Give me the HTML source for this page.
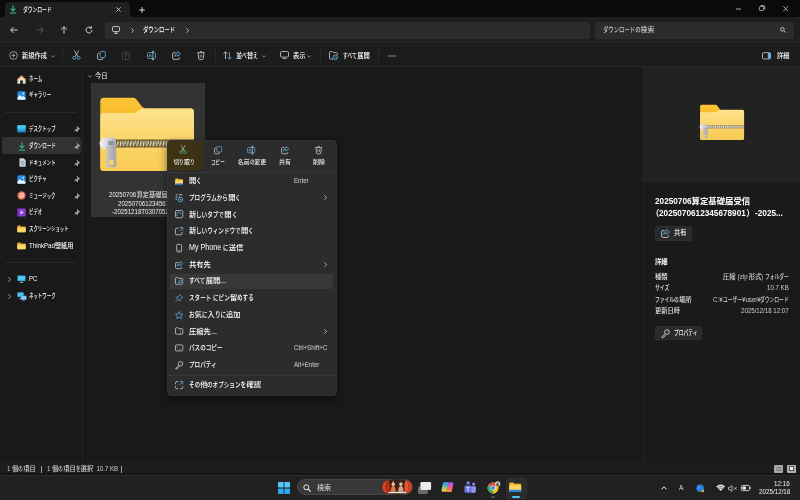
<!DOCTYPE html>
<html lang="ja">
<head>
<meta charset="utf-8">
<title>ダウンロード</title>
<style>
*{box-sizing:border-box;margin:0;padding:0}
html,body{width:800px;height:500px;overflow:hidden;background:#0a0a0a}
body{position:relative;font-family:"Liberation Sans","Noto Sans CJK JP",sans-serif;font-size:6.25px;color:#e8e8e8;line-height:1}
.abs{position:absolute}
.t{position:absolute;white-space:nowrap;font-weight:500;will-change:transform}
.kw{display:inline-block;white-space:nowrap}
.ks{display:inline-block;transform:scaleX(.765);transform-origin:0 50%}
svg{position:absolute;overflow:visible}
.ls{display:inline-block;white-space:pre;font-size:1.12em;transform:scaleX(.875);transform-origin:0 50%}
.sep{position:absolute;width:1px;background:#282828}
.hsep{position:absolute;height:1px;background:#333}
</style>
</head>
<body>
<!-- 00_frame -->
<div class="abs" style="left:0px;top:0px;width:800px;height:17px;background:#0a0a0a;"></div>
<div class="abs" style="left:5px;top:2px;width:125px;height:16px;background:#1f1f1f;border-radius:4px 4px 0 0"></div>
<svg style="left:2px;top:14px" width="3" height="3" viewBox="0 0 3 3"><path d="M3 0v3H0A3 3 0 0 0 3 0z" fill="#1f1f1f"/></svg>
<svg style="left:130px;top:14px" width="3" height="3" viewBox="0 0 3 3"><path d="M0 0v3h3A3 3 0 0 1 0 0z" fill="#1f1f1f"/></svg>
<div class="abs" style="left:0px;top:17px;width:800px;height:26px;background:#1f1f1f;"></div>
<div class="abs" style="left:105px;top:21.5px;width:485px;height:17px;background:#2c2c2c;border-radius:2px"></div>
<div class="abs" style="left:595px;top:21.5px;width:198.5px;height:17px;background:#2c2c2c;border-radius:2px"></div>
<div class="abs" style="left:0px;top:42px;width:800px;height:1px;background:#262626;"></div>
<div class="abs" style="left:0px;top:43px;width:800px;height:24px;background:#1c1c1c;border-top:1px solid #171717;border-bottom:1px solid #272727"></div>
<div class="abs" style="left:0px;top:67px;width:82px;height:395px;background:#191919;"></div>
<div class="abs" style="left:82px;top:67px;width:1px;height:395px;background:#242424;"></div>
<div class="abs" style="left:83px;top:67px;width:559px;height:395px;background:#191919;"></div>
<div class="abs" style="left:641.5px;top:67px;width:158.5px;height:115px;background:#222222;"></div>
<div class="abs" style="left:641.5px;top:182px;width:158.5px;height:280px;background:#1a1a1a;"></div>
<div class="abs" style="left:643.5px;top:182px;width:1.8px;height:280px;background:#222222;"></div>
<div class="abs" style="left:0px;top:462px;width:800px;height:13px;background:#1c1c1c;"></div>
<div class="abs" style="left:0px;top:473px;width:800px;height:1.5px;background:#151515;"></div>
<div class="abs" style="left:0px;top:474.5px;width:800px;height:25.5px;background:#212121;border-top:1px solid #2c2c2c"></div>
<!-- 10_title -->
<svg style="left:9px;top:5px" width="8" height="9" viewBox="0 0 8 9"><path d="M4 0.3v5.6M1.6 3.6L4 6l2.4-2.4" fill="none" stroke="#2fb58a" stroke-width="1.1"/><path d="M0.8 8h6.4" stroke="#2fb58a" stroke-width="1.1"/></svg>
<div class="t" style="top:4.50px;font-size:6.25px;color:#fff;line-height:10px;height:10px;left:23.00px;"><span class="kw" style="width:4.59em"><span class="ks">ダウンロード</span></span></div>
<svg style="left:116px;top:7px" width="5" height="5" viewBox="0 0 5 5"><path d="M0.3 0.3l4.4 4.4M4.7 0.3L0.3 4.7" stroke="#ddd" stroke-width="0.8"/></svg>
<svg style="left:139px;top:7px" width="6" height="6" viewBox="0 0 6 6"><path d="M3 0.2v5.6M0.2 3h5.6" stroke="#eee" stroke-width="0.9"/></svg>
<svg style="left:735.5px;top:8px" width="5" height="2" viewBox="0 0 5 2"><path d="M0 1h5" stroke="#ccc" stroke-width="0.8"/></svg>
<svg style="left:759px;top:5.2px" width="6.2" height="6.2" viewBox="0 0 7 7"><rect x="0.5" y="1.7" width="4.6" height="4.6" rx="1" fill="none" stroke="#ccc" stroke-width="0.9"/><path d="M2 0.6h3a1.5 1.5 0 0 1 1.5 1.5v3" fill="none" stroke="#ccc" stroke-width="0.9"/></svg>
<svg style="left:783.3px;top:5.5px" width="5.4" height="5.4" viewBox="0 0 6 6"><path d="M0.3 0.3l5.4 5.4M5.7 0.3L0.3 5.7" stroke="#ddd" stroke-width="0.8"/></svg>
<!-- 20_nav -->
<svg style="left:10px;top:26px" width="8" height="8" viewBox="0 0 8 8"><path d="M7.5 4H0.8M3.6 1L0.7 4l2.9 3" fill="none" stroke="#e4e4e4" stroke-width="0.9"/></svg>
<svg style="left:36px;top:26px" width="8" height="8" viewBox="0 0 8 8"><path d="M0.5 4h6.7M4.4 1l2.9 3-2.9 3" fill="none" stroke="#5a5a5a" stroke-width="0.9"/></svg>
<svg style="left:60px;top:26px" width="8" height="8" viewBox="0 0 8 8"><path d="M4 7.5V0.8M1 3.6L4 0.7l3 2.9" fill="none" stroke="#e4e4e4" stroke-width="0.9"/></svg>
<svg style="left:85px;top:26px" width="8" height="8" viewBox="0 0 8 8"><path d="M6.9 4a2.9 2.9 0 1 1-1-2.2" fill="none" stroke="#e4e4e4" stroke-width="0.9"/><path d="M6.4 0.3v1.9H4.5" fill="none" stroke="#e4e4e4" stroke-width="0.9"/></svg>
<svg style="left:112px;top:26px" width="8" height="8" viewBox="0 0 8 8"><rect x="0.5" y="0.6" width="7" height="5" rx="1" fill="none" stroke="#d8d8d8" stroke-width="0.9"/><path d="M2.3 7.4h3.4M4 5.6v1.8" stroke="#d8d8d8" stroke-width="0.9"/></svg>
<svg style="left:131px;top:27.5px" width="3" height="5" viewBox="0 0 3 5"><path d="M0.4 0.3L2.6 2.5 0.4 4.7" fill="none" stroke="#ddd" stroke-width="0.8"/></svg>
<div class="t" style="top:25.00px;font-size:7.00px;color:#fff;line-height:10px;height:10px;left:143.00px;"><span class="kw" style="width:4.59em"><span class="ks">ダウンロード</span></span></div>
<svg style="left:185.5px;top:27.5px" width="3" height="5" viewBox="0 0 3 5"><path d="M0.4 0.3L2.6 2.5 0.4 4.7" fill="none" stroke="#ddd" stroke-width="0.8"/></svg>
<div class="t" style="top:25.00px;font-size:7.00px;color:#c4c4c4;line-height:10px;height:10px;left:603.00px;"><span class="kw" style="width:5.36em"><span class="ks">ダウンロードの</span></span>検索</div>
<svg style="left:780px;top:27px" width="6" height="6" viewBox="0 0 6 6"><circle cx="2.3" cy="2.3" r="1.8" fill="none" stroke="#ddd" stroke-width="0.8"/><path d="M3.6 3.6l2 2" stroke="#ddd" stroke-width="0.9"/></svg>
<!-- 30_toolbar -->
<svg style="left:8.5px;top:51px" width="9" height="9" viewBox="0 0 9 9"><circle cx="4.5" cy="4.5" r="3.9" fill="none" stroke="#9fb4c4" stroke-width="0.8"/><path d="M4.5 2.6v3.8M2.6 4.5h3.8" stroke="#9fb4c4" stroke-width="0.8"/></svg>
<div class="t" style="top:50.50px;font-size:6.25px;color:#fff;line-height:10px;height:10px;left:22.00px;">新規作成</div>
<svg style="left:50.5px;top:54.5px" width="4" height="3" viewBox="0 0 4 3"><path d="M0.3 0.5L2 2.2 3.7 0.5" fill="none" stroke="#aaa" stroke-width="0.7"/></svg>
<div class="sep" style="left:62px;top:48px;height:15px"></div>
<svg style="left:71.5px;top:50px" width="9" height="10" viewBox="0 0 9 10"><path d="M2.2 0.4L6 6.6M6.8 0.4L3 6.6" fill="none" stroke="#cfcfcf" stroke-width="0.8"/><circle cx="2.3" cy="7.8" r="1.5" fill="none" stroke="#5fb0e0" stroke-width="0.8"/><circle cx="6.7" cy="7.8" r="1.5" fill="none" stroke="#5fb0e0" stroke-width="0.8"/></svg>
<svg style="left:96.5px;top:50.5px" width="9" height="9" viewBox="0 0 9 9"><rect x="3" y="0.5" width="5.3" height="6" rx="1.2" fill="none" stroke="#5fb0e0" stroke-width="0.8"/><path d="M2.6 2.3H1.7a1.2 1.2 0 0 0-1.2 1.2v3.8a1.2 1.2 0 0 0 1.2 1.2h3a1.2 1.2 0 0 0 1.2-1.2v-0.5" fill="none" stroke="#cfcfcf" stroke-width="0.8"/></svg>
<svg style="left:122px;top:50.5px" width="8" height="9" viewBox="0 0 8 9"><rect x="0.5" y="1.3" width="7" height="7.2" rx="1" fill="none" stroke="#4a4a4a" stroke-width="0.8"/><rect x="2.5" y="0.4" width="3" height="1.8" rx="0.6" fill="#1c1c1c" stroke="#4a4a4a" stroke-width="0.7"/><rect x="3.4" y="3.6" width="4.1" height="4.9" fill="#1c1c1c" stroke="#4a4a4a" stroke-width="0.7"/></svg>
<svg style="left:146.5px;top:50.5px" width="9" height="9" viewBox="0 0 9 9"><rect x="0.5" y="1.6" width="8" height="5.8" rx="1.2" fill="none" stroke="#5fb0e0" stroke-width="0.8"/><path d="M5.9 0.3v8.4M4.9 0.3h2M4.9 8.7h2" stroke="#cfcfcf" stroke-width="0.7"/><path d="M1.9 6L3.2 3l1.3 3M2.3 5h1.8" fill="none" stroke="#5fb0e0" stroke-width="0.6"/></svg>
<svg style="left:171.5px;top:50.5px" width="9" height="9" viewBox="0 0 9 9"><path d="M3.6 1.6H2a1.4 1.4 0 0 0-1.4 1.4v4a1.4 1.4 0 0 0 1.4 1.4h4a1.4 1.4 0 0 0 1.4-1.4V6.4" fill="none" stroke="#cfcfcf" stroke-width="0.8"/><path d="M5.6 0.5l2.9 2.4-2.9 2.4V3.9C4.2 3.8 3.3 4.4 2.7 5.6 2.8 3.5 3.8 2.2 5.6 2z" fill="none" stroke="#5fb0e0" stroke-width="0.8" stroke-linejoin="round"/></svg>
<svg style="left:197px;top:50.5px" width="8" height="9" viewBox="0 0 8 9"><path d="M0.3 1.7h7.4M2.8 1.6a1.2 1.2 0 0 1 2.4 0" fill="none" stroke="#cfcfcf" stroke-width="0.8"/><path d="M1.1 1.9l0.6 5.7a1 1 0 0 0 1 0.9h2.6a1 1 0 0 0 1-0.9l0.6-5.7" fill="none" stroke="#cfcfcf" stroke-width="0.8"/><path d="M3.2 3.6v3M4.8 3.6v3" stroke="#cfcfcf" stroke-width="0.6"/></svg>
<div class="sep" style="left:215px;top:48px;height:15px"></div>
<svg style="left:222.5px;top:51px" width="9" height="9" viewBox="0 0 9 9"><path d="M2.5 8V0.8M0.5 2.8l2-2 2 2" fill="none" stroke="#cfcfcf" stroke-width="0.8"/><path d="M6.5 1v7.2M4.5 6.2l2 2 2-2" fill="none" stroke="#5fb0e0" stroke-width="0.8"/></svg>
<div class="t" style="top:50.50px;font-size:6.25px;color:#fff;line-height:10px;height:10px;left:236.00px;">並<span class="kw" style="width:0.77em"><span class="ks">べ</span></span>替<span class="kw" style="width:0.77em"><span class="ks">え</span></span></div>
<svg style="left:261.5px;top:54.5px" width="4" height="3" viewBox="0 0 4 3"><path d="M0.3 0.5L2 2.2 3.7 0.5" fill="none" stroke="#aaa" stroke-width="0.7"/></svg>
<svg style="left:280px;top:51px" width="9" height="8" viewBox="0 0 9 8"><rect x="0.5" y="0.5" width="8" height="5.6" rx="1.1" fill="none" stroke="#cfcfcf" stroke-width="0.8"/><path d="M2.6 7.5h3.8" stroke="#cfcfcf" stroke-width="0.8"/></svg>
<div class="t" style="top:50.50px;font-size:6.25px;color:#fff;line-height:10px;height:10px;left:293.00px;">表示</div>
<svg style="left:306.5px;top:54.5px" width="4" height="3" viewBox="0 0 4 3"><path d="M0.3 0.5L2 2.2 3.7 0.5" fill="none" stroke="#aaa" stroke-width="0.7"/></svg>
<div class="sep" style="left:320px;top:48px;height:15px"></div>
<svg style="left:329px;top:51px" width="9" height="9" viewBox="0 0 9 9"><path d="M0.5 7V1.6a1 1 0 0 1 1-1h1.7l1 1h3.2a1 1 0 0 1 1 1V4" fill="none" stroke="#cfcfcf" stroke-width="0.8"/><path d="M0.5 7a1 1 0 0 0 1 1H4" fill="none" stroke="#cfcfcf" stroke-width="0.8"/><circle cx="6.3" cy="6.3" r="2.3" fill="none" stroke="#5fb0e0" stroke-width="0.9"/><path d="M5.3 6.3h2M6.5 5.4l0.9 0.9-0.9 0.9" fill="none" stroke="#5fb0e0" stroke-width="0.6"/></svg>
<div class="t" style="top:50.50px;font-size:6.25px;color:#fff;line-height:10px;height:10px;left:343.00px;"><span class="kw" style="width:2.29em"><span class="ks">すべて</span></span>展開</div>
<div class="sep" style="left:378px;top:48px;height:15px"></div>
<svg style="left:388px;top:54.5px" width="8" height="2" viewBox="0 0 8 2"><circle cx="1" cy="1" r="0.75" fill="#e0e0e0"/><circle cx="4" cy="1" r="0.75" fill="#e0e0e0"/><circle cx="7" cy="1" r="0.75" fill="#e0e0e0"/></svg>
<svg style="left:762px;top:51.5px" width="9" height="8" viewBox="0 0 9 8"><rect x="0.5" y="0.7" width="8" height="6.2" rx="1.1" fill="none" stroke="#cfcfcf" stroke-width="0.8"/><path d="M5.8 0.8h1.6a1 1 0 0 1 1 1v4a1 1 0 0 1-1 1H5.8z" fill="#5fb0e0"/></svg>
<div class="t" style="top:50.50px;font-size:6.25px;color:#fff;line-height:10px;height:10px;left:777.00px;">詳細</div>
<!-- 40_side -->
<div class="abs" style="left:1.5px;top:137px;width:79.5px;height:16.8px;background:#323232;border-radius:2px"></div>
<div class="hsep" style="left:5px;top:112px;width:72px;background:#292929"></div>
<div class="hsep" style="left:5px;top:262px;width:72px;background:#292929"></div>
<svg style="left:17px;top:74.5px" width="9" height="9" viewBox="0 0 9 9"><path d="M4.5 0.4L0.4 4v4.2a0.5 0.5 0 0 0 0.5 0.5h2.3V5.6h2.6v3.1h2.3a0.5 0.5 0 0 0 0.5-0.5V4z" fill="#e8dccb"/><path d="M4.5 0.3L0.2 4.2l0.7 0.7 3.6-3.2 3.6 3.2 0.7-0.7z" fill="#e6913c"/></svg>
<div class="t" style="top:74.00px;font-size:6.25px;color:#fff;line-height:10px;height:10px;left:28.50px;"><span class="kw" style="width:2.13em"><span class="ks" style="transform:scaleX(0.710)">ホーム</span></span></div>
<svg style="left:17px;top:91px" width="9" height="9" viewBox="0 0 9 9"><rect x="0.3" y="0.3" width="8.4" height="8.4" rx="1.6" fill="#2c8be0"/><path d="M0.3 7l2.6-2.9 2 2 1.3-1.2 2.5 2.4v0.2a1.2 1.2 0 0 1-1.2 1.2H1.5a1.2 1.2 0 0 1-1.2-1.2z" fill="#eaf4ff"/><circle cx="6.3" cy="2.7" r="0.9" fill="#d7ecff"/></svg>
<div class="t" style="top:90.40px;font-size:6.25px;color:#fff;line-height:10px;height:10px;left:28.50px;"><span class="kw" style="width:3.55em"><span class="ks" style="transform:scaleX(0.710)">ギャラリー</span></span></div>
<svg style="left:17px;top:124.5px" width="9" height="8" viewBox="0 0 9 8"><rect x="0.3" y="0.3" width="8.4" height="7" rx="0.9" fill="#2aa4dc"/><rect x="0.3" y="0.3" width="8.4" height="3.4" rx="0.9" fill="#4cc3ec"/><rect x="0.3" y="6.2" width="8.4" height="1.1" fill="#1877b8"/></svg>
<div class="t" style="top:124.00px;font-size:6.25px;color:#fff;line-height:10px;height:10px;left:28.50px;"><span class="kw" style="width:4.26em"><span class="ks" style="transform:scaleX(0.710)">デスクトップ</span></span></div>
<svg style="left:74px;top:126px" width="6" height="6" viewBox="0 0 6 6"><path d="M3.1 0.4l2.5 2.5-1 0.3-1 1.2-0.2 1.5L1.1 3.6l1.5-0.2 1.2-1zM2.2 3.8L0.4 5.6" fill="#aeaeae" stroke="#aeaeae" stroke-width="0.7" stroke-linejoin="round"/></svg>
<svg style="left:17.5px;top:141.5px" width="8" height="9" viewBox="0 0 8 9"><path d="M4 0.3v5.6M1.6 3.6L4 6l2.4-2.4" fill="none" stroke="#2fb58a" stroke-width="1.1"/><path d="M0.8 8h6.4" stroke="#2fb58a" stroke-width="1.1"/></svg>
<div class="t" style="top:141.00px;font-size:6.25px;color:#fff;line-height:10px;height:10px;left:28.50px;"><span class="kw" style="width:4.26em"><span class="ks" style="transform:scaleX(0.710)">ダウンロード</span></span></div>
<svg style="left:74px;top:143px" width="6" height="6" viewBox="0 0 6 6"><path d="M3.1 0.4l2.5 2.5-1 0.3-1 1.2-0.2 1.5L1.1 3.6l1.5-0.2 1.2-1zM2.2 3.8L0.4 5.6" fill="#aeaeae" stroke="#aeaeae" stroke-width="0.7" stroke-linejoin="round"/></svg>
<svg style="left:18.8px;top:158px" width="7" height="9" viewBox="0 0 7 9"><path d="M0.4 1a0.7 0.7 0 0 1 0.7-0.7h3.6l2 2v5.7a0.7 0.7 0 0 1-0.7 0.7H1.1a0.7 0.7 0 0 1-0.7-0.7z" fill="#c9d3dc"/><path d="M1.7 3.6h3.6M1.7 5h3.6M1.7 6.4h3.6" stroke="#6b7f92" stroke-width="0.6"/></svg>
<div class="t" style="top:157.50px;font-size:6.25px;color:#fff;line-height:10px;height:10px;left:28.50px;"><span class="kw" style="width:4.26em"><span class="ks" style="transform:scaleX(0.710)">ドキュメント</span></span></div>
<svg style="left:74px;top:159.5px" width="6" height="6" viewBox="0 0 6 6"><path d="M3.1 0.4l2.5 2.5-1 0.3-1 1.2-0.2 1.5L1.1 3.6l1.5-0.2 1.2-1zM2.2 3.8L0.4 5.6" fill="#aeaeae" stroke="#aeaeae" stroke-width="0.7" stroke-linejoin="round"/></svg>
<svg style="left:17px;top:174.5px" width="9" height="9" viewBox="0 0 9 9"><rect x="0.3" y="0.3" width="8.4" height="8.4" rx="1.6" fill="#2c8be0"/><path d="M0.3 7l2.6-2.9 2 2 1.3-1.2 2.5 2.4v0.2a1.2 1.2 0 0 1-1.2 1.2H1.5a1.2 1.2 0 0 1-1.2-1.2z" fill="#eaf4ff"/><circle cx="6.3" cy="2.7" r="0.9" fill="#d7ecff"/></svg>
<div class="t" style="top:174.00px;font-size:6.25px;color:#fff;line-height:10px;height:10px;left:28.50px;"><span class="kw" style="width:2.84em"><span class="ks" style="transform:scaleX(0.710)">ピクチャ</span></span></div>
<svg style="left:74px;top:176px" width="6" height="6" viewBox="0 0 6 6"><path d="M3.1 0.4l2.5 2.5-1 0.3-1 1.2-0.2 1.5L1.1 3.6l1.5-0.2 1.2-1zM2.2 3.8L0.4 5.6" fill="#aeaeae" stroke="#aeaeae" stroke-width="0.7" stroke-linejoin="round"/></svg>
<svg style="left:17px;top:191px" width="9" height="9" viewBox="0 0 9 9"><circle cx="4.5" cy="4.5" r="4.2" fill="#e0644c"/><circle cx="4.5" cy="4.5" r="3" fill="#f08f6e"/><path d="M3.9 6.2V2.6l2.2-0.5v3.3" fill="none" stroke="#fff" stroke-width="0.6"/><circle cx="3.3" cy="6.2" r="0.7" fill="#fff"/><circle cx="5.5" cy="5.5" r="0.7" fill="#fff"/></svg>
<div class="t" style="top:190.50px;font-size:6.25px;color:#fff;line-height:10px;height:10px;left:28.50px;"><span class="kw" style="width:4.26em"><span class="ks" style="transform:scaleX(0.710)">ミュージック</span></span></div>
<svg style="left:74px;top:192.5px" width="6" height="6" viewBox="0 0 6 6"><path d="M3.1 0.4l2.5 2.5-1 0.3-1 1.2-0.2 1.5L1.1 3.6l1.5-0.2 1.2-1zM2.2 3.8L0.4 5.6" fill="#aeaeae" stroke="#aeaeae" stroke-width="0.7" stroke-linejoin="round"/></svg>
<svg style="left:17px;top:207.5px" width="9" height="9" viewBox="0 0 9 9"><rect x="0.3" y="0.5" width="8.4" height="8" rx="1.2" fill="#8b3fd0"/><rect x="0.3" y="0.5" width="1.6" height="8" fill="#6a2bb0"/><path d="M3.6 2.8v3.4l3-1.7z" fill="#f1dcff"/></svg>
<div class="t" style="top:207.00px;font-size:6.25px;color:#fff;line-height:10px;height:10px;left:28.50px;"><span class="kw" style="width:2.13em"><span class="ks" style="transform:scaleX(0.710)">ビデオ</span></span></div>
<svg style="left:74px;top:209px" width="6" height="6" viewBox="0 0 6 6"><path d="M3.1 0.4l2.5 2.5-1 0.3-1 1.2-0.2 1.5L1.1 3.6l1.5-0.2 1.2-1zM2.2 3.8L0.4 5.6" fill="#aeaeae" stroke="#aeaeae" stroke-width="0.7" stroke-linejoin="round"/></svg>
<svg style="left:17px;top:225px" width="9" height="8" viewBox="0 0 9 8"><path d="M0.3 1.2a0.7 0.7 0 0 1 0.7-0.7h2.2l0.9 0.9h3.9a0.7 0.7 0 0 1 0.7 0.7v4.4a0.7 0.7 0 0 1-0.7 0.7H1a0.7 0.7 0 0 1-0.7-0.7z" fill="#e9a825"/><path d="M0.3 2.6h8.4v3.9a0.7 0.7 0 0 1-0.7 0.7H1a0.7 0.7 0 0 1-0.7-0.7z" fill="#fbd669"/></svg>
<div class="t" style="top:223.80px;font-size:6.25px;color:#fff;line-height:10px;height:10px;left:28.50px;"><span class="kw" style="width:6.39em"><span class="ks" style="transform:scaleX(0.710)">スクリーンショット</span></span></div>
<svg style="left:17px;top:241.5px" width="9" height="8" viewBox="0 0 9 8"><path d="M0.3 1.2a0.7 0.7 0 0 1 0.7-0.7h2.2l0.9 0.9h3.9a0.7 0.7 0 0 1 0.7 0.7v4.4a0.7 0.7 0 0 1-0.7 0.7H1a0.7 0.7 0 0 1-0.7-0.7z" fill="#e9a825"/><path d="M0.3 2.6h8.4v3.9a0.7 0.7 0 0 1-0.7 0.7H1a0.7 0.7 0 0 1-0.7-0.7z" fill="#fbd669"/></svg>
<div class="t" style="top:240.50px;font-size:6.25px;color:#fff;line-height:10px;height:10px;left:28.50px;"><span class="kw" style="width:4.140em"><span class="ls">ThinkPad</span></span>壁紙用</div>
<svg style="left:7.5px;top:276.5px" width="3" height="5" viewBox="0 0 3 5"><path d="M0.4 0.3L2.6 2.5 0.4 4.7" fill="none" stroke="#ccc" stroke-width="0.8"/></svg>
<svg style="left:17px;top:275px" width="9" height="8" viewBox="0 0 9 8"><rect x="0.4" y="0.4" width="8.2" height="5.6" rx="0.7" fill="#2a9fd8"/><rect x="1.1" y="1.1" width="6.8" height="4.2" fill="#53c6f0"/><path d="M2.6 7.5h3.8M4.5 6v1.5" stroke="#9aa7b2" stroke-width="0.8"/></svg>
<div class="t" style="top:274.00px;font-size:6.25px;color:#fff;line-height:10px;height:10px;left:28.50px;"><span class="kw" style="width:1.361em"><span class="ls">PC</span></span></div>
<svg style="left:7.5px;top:293.5px" width="3" height="5" viewBox="0 0 3 5"><path d="M0.4 0.3L2.6 2.5 0.4 4.7" fill="none" stroke="#ccc" stroke-width="0.8"/></svg>
<svg style="left:17px;top:291.5px" width="10" height="9" viewBox="0 0 10 9"><rect x="0.3" y="0.3" width="6.4" height="4.6" rx="0.6" fill="#2a9fd8"/><rect x="0.9" y="0.9" width="5.2" height="3.4" fill="#53c6f0"/><rect x="3.6" y="3.6" width="6" height="4.4" rx="0.6" fill="#4a7fb4"/><rect x="4.2" y="4.2" width="4.8" height="3.2" fill="#8fd0f5"/><path d="M2 6.7h2M5.6 8.7h2" stroke="#9aa7b2" stroke-width="0.7"/></svg>
<div class="t" style="top:291.00px;font-size:6.25px;color:#fff;line-height:10px;height:10px;left:28.50px;"><span class="kw" style="width:4.26em"><span class="ks" style="transform:scaleX(0.710)">ネットワーク</span></span></div>
<!-- 50_main -->
<svg style="left:87.5px;top:74.5px" width="4" height="3" viewBox="0 0 4 3"><path d="M0.3 0.5L2 2.2 3.7 0.5" fill="none" stroke="#bbb" stroke-width="0.7"/></svg>
<div class="t" style="top:71.00px;font-size:6.25px;color:#e0e0e0;line-height:10px;height:10px;left:95.00px;">今日</div>
<div class="abs" style="left:91px;top:83px;width:113.5px;height:133.5px;background:#333333;"></div>
<svg style="left:98px;top:96px" width="98" height="76" viewBox="98 96 98 76">
<defs>
<linearGradient id="fb" x1="0" y1="0" x2="0" y2="1"><stop offset="0" stop-color="#fcc435"/><stop offset="1" stop-color="#eba51a"/></linearGradient>
<linearGradient id="ff" x1="0" y1="0" x2="0" y2="1"><stop offset="0" stop-color="#fde28f"/><stop offset="0.5" stop-color="#fbd669"/><stop offset="1" stop-color="#f8cb55"/></linearGradient>
<linearGradient id="zp" x1="0" y1="0" x2="1" y2="0"><stop offset="0" stop-color="#f4f4f6"/><stop offset="0.55" stop-color="#d2d2d8"/><stop offset="1" stop-color="#b4b4ba"/></linearGradient>
<linearGradient id="zt" x1="0" y1="0" x2="1" y2="0"><stop offset="0" stop-color="#c6c6c8"/><stop offset="1" stop-color="#a4a4a8"/></linearGradient>
<pattern id="teeth" x="116" y="139.5" width="3.3" height="8" patternUnits="userSpaceOnUse"><rect width="3.3" height="8" fill="#5e4e1c"/><path d="M0.2 7.2L1.2 1.4h1L1.3 7.2z" fill="#ece8dc"/><path d="M1.9 6.6L2.8 0.8h0.5v3z" fill="#cfc8b0"/></pattern>
</defs>
<path d="M100.3 101.2a3.5 3.5 0 0 1 3.5-3.5h28.7c2 0 3.2 0.6 4.5 2.2l3.6 5.2c1.3 1.9 2.6 3.1 5.2 3.1h44.7a3.5 3.5 0 0 1 3.5 3.5v55.7a3.5 3.5 0 0 1-3.5 3.5H103.8a3.5 3.5 0 0 1-3.5-3.5z" fill="url(#fb)"/>
<path d="M100.3 116a3 3 0 0 1 3-3h29.2c2.3 0 3.6-0.5 5.2-1.8l1.6-1.3c1.2-0.9 2.2-1.2 3.7-1.2h47.5a3.5 3.5 0 0 1 3.5 3.5v55.2a3.5 3.5 0 0 1-3.5 3.5H103.8a3.5 3.5 0 0 1-3.5-3.5z" fill="url(#ff)"/>
<rect x="114" y="139.5" width="80" height="8" fill="url(#teeth)"/>
<path d="M99.6 143.4a5.8 5.8 0 0 1 5.8-5.8h7.4a3 3 0 0 1 3 3v5.7a3 3 0 0 1-3 3h-7.4a5.8 5.8 0 0 1-5.8-5.8z" fill="url(#zp)"/>
<rect x="108.2" y="141" width="6" height="4.2" rx="0.6" fill="#8f93a3"/>
<path d="M106.4 145.5h9.9v20.4a1.4 1.4 0 0 1-1.4 1.4h-7.1a1.4 1.4 0 0 1-1.4-1.4z" fill="url(#zt)"/>
<rect x="109.2" y="160.2" width="4.4" height="4.4" fill="#f9d465"/>
</svg>
<div class="t" style="top:190.30px;font-size:6.25px;color:#ececec;line-height:10px;height:10px;font-weight:400;left:148.00px;width:200px;margin-left:-100px;text-align:center;"><span class="kw" style="width:4.360em"><span class="ls">20250706</span></span>算定基礎届受信（</div>
<div class="t" style="top:198.60px;font-size:6.25px;color:#ececec;line-height:10px;height:10px;font-weight:400;left:148.00px;width:200px;margin-left:-100px;text-align:center;"><span class="kw" style="width:8.721em"><span class="ls">2025070612345678</span></span>）</div>
<div class="t" style="top:206.90px;font-size:6.25px;color:#ececec;line-height:10px;height:10px;font-weight:400;left:148.00px;width:200px;margin-left:-100px;text-align:center;"><span class="kw" style="width:11.442em"><span class="ls">-20251218T030705Z-1-00</span></span></div>
<!-- 60_details -->
<svg style="left:698.6px;top:104.4px" width="46" height="36.5" viewBox="98 96 98 76" preserveAspectRatio="none">
<path d="M100.3 101.2a3.5 3.5 0 0 1 3.5-3.5h28.7c2 0 3.2 0.6 4.5 2.2l3.6 5.2c1.3 1.9 2.6 3.1 5.2 3.1h44.7a3.5 3.5 0 0 1 3.5 3.5v55.7a3.5 3.5 0 0 1-3.5 3.5H103.8a3.5 3.5 0 0 1-3.5-3.5z" fill="url(#fb)"/>
<path d="M100.3 116a3 3 0 0 1 3-3h29.2c2.3 0 3.6-0.5 5.2-1.8l1.6-1.3c1.2-0.9 2.2-1.2 3.7-1.2h47.5a3.5 3.5 0 0 1 3.5 3.5v55.2a3.5 3.5 0 0 1-3.5 3.5H103.8a3.5 3.5 0 0 1-3.5-3.5z" fill="url(#ff)"/>
<rect x="114" y="140" width="80" height="7" fill="#9c9274"/><path d="M114 143.5h80" stroke="#e4e0d2" stroke-width="4" stroke-dasharray="2.2 2.2"/>
<path d="M99.6 143.4a5.8 5.8 0 0 1 5.8-5.8h7.4a3 3 0 0 1 3 3v5.7a3 3 0 0 1-3 3h-7.4a5.8 5.8 0 0 1-5.8-5.8z" fill="url(#zp)"/>
<path d="M106.4 145.5h9.9v20.4a1.4 1.4 0 0 1-1.4 1.4h-7.1a1.4 1.4 0 0 1-1.4-1.4z" fill="url(#zt)"/>
<rect x="109.2" y="160.2" width="4.4" height="4.4" fill="#f9d465"/>
</svg>
<div class="t" style="top:195.00px;font-size:8.40px;color:#fff;line-height:12px;height:12px;font-weight:700;left:655.00px;"><span class="kw" style="width:4.360em"><span class="ls">20250706</span></span>算定基礎届受信</div>
<div class="t" style="top:206.60px;font-size:8.40px;color:#fff;line-height:12px;height:12px;font-weight:700;left:655.00px;margin-left:-4.4px;">（<span class="kw" style="width:10.356em"><span class="ls">2025070612345678901</span></span>）<span class="kw" style="width:3.323em"><span class="ls">-2025...</span></span></div>
<div class="abs" style="left:654.8px;top:225.8px;width:37px;height:14.8px;background:#2a2a2a;border-radius:2px;border:0.5px solid #2f2f2f"></div>
<svg style="left:660.5px;top:229px" width="9" height="9" viewBox="0 0 9 9"><path d="M3.6 1.6H2a1.4 1.4 0 0 0-1.4 1.4v4a1.4 1.4 0 0 0 1.4 1.4h4a1.4 1.4 0 0 0 1.4-1.4V6.4" fill="none" stroke="#d8d8d8" stroke-width="0.8"/><path d="M5.6 0.5l2.9 2.4-2.9 2.4V3.9C4.2 3.8 3.3 4.4 2.7 5.6 2.8 3.5 3.8 2.2 5.6 2z" fill="none" stroke="#5fb0e0" stroke-width="0.8" stroke-linejoin="round"/></svg>
<div class="t" style="top:228.30px;font-size:6.25px;color:#fff;line-height:10px;height:10px;left:673.70px;">共有</div>
<div class="t" style="top:257.20px;font-size:6.25px;color:#fff;line-height:10px;height:10px;font-weight:700;left:655.00px;">詳細</div>
<div class="t" style="top:271.50px;font-size:6.25px;color:#e4e4e4;line-height:10px;height:10px;left:655.00px;">種類</div>
<div class="t" style="top:271.50px;font-size:6.25px;color:#d0d0d0;line-height:10px;height:10px;right:11.00px;text-align:right;">圧縮<span class="kw" style="width:2.124em"><span class="ls">&nbsp;(zip&nbsp;</span></span>形式<span class="kw" style="width:0.599em"><span class="ls">)&nbsp;</span></span><span class="kw" style="width:3.83em"><span class="ks">フォルダー</span></span></div>
<div class="t" style="top:282.90px;font-size:6.25px;color:#e4e4e4;line-height:10px;height:10px;left:655.00px;"><span class="kw" style="width:2.29em"><span class="ks">サイズ</span></span></div>
<div class="t" style="top:282.90px;font-size:6.25px;color:#d0d0d0;line-height:10px;height:10px;right:11.00px;text-align:right;"><span class="kw" style="width:3.487em"><span class="ls">10.7 KB</span></span></div>
<div class="t" style="top:295.00px;font-size:6.25px;color:#e4e4e4;line-height:10px;height:10px;left:655.00px;"><span class="kw" style="width:3.83em"><span class="ks">ファイルの</span></span>場所</div>
<div class="t" style="top:295.00px;font-size:6.25px;color:#d0d0d0;line-height:10px;height:10px;right:11.00px;text-align:right;"><span class="kw" style="width:1.525em"><span class="ls">C:¥</span></span><span class="kw" style="width:3.06em"><span class="ks">ユーザー</span></span><span class="kw" style="width:2.996em"><span class="ls">¥user¥</span></span><span class="kw" style="width:4.59em"><span class="ks">ダウンロード</span></span></div>
<div class="t" style="top:306.30px;font-size:6.25px;color:#e4e4e4;line-height:10px;height:10px;left:655.00px;">更新日時</div>
<div class="t" style="top:306.30px;font-size:6.25px;color:#d0d0d0;line-height:10px;height:10px;right:11.00px;text-align:right;"><span class="kw" style="width:7.629em"><span class="ls">2025/12/18 12:07</span></span></div>
<div class="abs" style="left:654.8px;top:325.6px;width:47.2px;height:14.3px;background:#2a2a2a;border-radius:2px;border:0.5px solid #2f2f2f"></div>
<svg style="left:661px;top:328.5px" width="9" height="9" viewBox="0 0 9 9"><circle cx="6" cy="3" r="2.4" fill="none" stroke="#d8d8d8" stroke-width="0.8"/><path d="M4.2 4.6L0.8 8v0.6h1.4l0.5-0.9 0.9-0.2 0.3-0.9 0.9-0.3" fill="none" stroke="#d8d8d8" stroke-width="0.8" stroke-linejoin="round"/><circle cx="6.7" cy="2.3" r="0.5" fill="#d8d8d8"/></svg>
<div class="t" style="top:328.00px;font-size:6.25px;color:#fff;line-height:10px;height:10px;left:673.70px;"><span class="kw" style="width:3.83em"><span class="ks">プロパティ</span></span></div>
<!-- 70_status -->
<div class="t" style="top:464.00px;font-size:6.25px;color:#d0d0d0;line-height:10px;height:10px;left:7.00px;"><span class="kw" style="width:0.817em"><span class="ls">1&nbsp;</span></span>個<span class="kw" style="width:0.77em"><span class="ks">の</span></span>項目</div>
<div class="abs" style="left:40.5px;top:465.5px;width:0.8px;height:7px;background:#9a9a9a;"></div>
<div class="t" style="top:464.00px;font-size:6.25px;color:#d0d0d0;line-height:10px;height:10px;left:46.50px;"><span class="kw" style="width:0.817em"><span class="ls">1&nbsp;</span></span>個<span class="kw" style="width:0.77em"><span class="ks">の</span></span>項目<span class="kw" style="width:0.77em"><span class="ks">を</span></span>選択<span class="kw" style="width:4.032em"><span class="ls">&nbsp;&nbsp;10.7&nbsp;KB</span></span></div>
<div class="abs" style="left:120.5px;top:465.5px;width:0.8px;height:7px;background:#9a9a9a;"></div>
<div class="abs" style="left:774px;top:464.5px;width:8.6px;height:8.6px;background:#a8a8a8;border-radius:1px"></div>
<svg style="left:775.5px;top:466px" width="6" height="6" viewBox="0 0 6 6"><path d="M0.5 1.5h5M0.5 3h5M0.5 4.5h5" stroke="#666" stroke-width="0.6"/></svg>
<div class="abs" style="left:787px;top:464.5px;width:8.6px;height:8.6px;background:#b0b0b0;border-radius:1px"></div>
<div class="abs" style="left:788.8px;top:466.2px;width:5px;height:4.6px;background:#f0f0f0;border:0.6px solid #555"></div>
<!-- 80_taskbar -->
<svg style="left:278px;top:481.8px" width="12" height="12" viewBox="0 0 12 12"><rect x="0" y="0" width="5.6" height="5.6" rx="0.5" fill="#52c6fb"/><rect x="6.4" y="0" width="5.6" height="5.6" rx="0.5" fill="#52c6fb"/><rect x="0" y="6.4" width="5.6" height="5.6" rx="0.5" fill="#2fa8ef"/><rect x="6.4" y="6.4" width="5.6" height="5.6" rx="0.5" fill="#2fa8ef"/></svg>
<div class="abs" style="left:297.2px;top:479px;width:115.4px;height:16.4px;background:#383838;border-radius:8.2px;border:0.5px solid #464646"></div>
<svg style="left:303.2px;top:484px" width="8" height="8" viewBox="0 0 8 8"><circle cx="3.3" cy="3.3" r="2.5" fill="none" stroke="#eee" stroke-width="1"/><path d="M5.2 5.2l2.4 2.4" stroke="#eee" stroke-width="1.1"/></svg>
<div class="t" style="top:482.80px;font-size:7.00px;color:#d0d0d0;line-height:10px;height:10px;left:316.50px;">検索</div>
<svg style="left:381.6px;top:479.4px" width="30.4" height="15.8" viewBox="0 0 30.4 15.8">
<ellipse cx="15.2" cy="7.9" rx="15" ry="7.8" fill="#3b1d18"/>
<path d="M6.6 0.9C2.6 1.8 0.3 4.6 0.3 7.9s2.3 6.1 6.3 7c-2-2-2.9-4.3-2.9-7s0.9-5 2.9-7z" fill="#d8401f"/>
<path d="M6.6 0.9c-2 2-2.9 4.3-2.9 7s0.9 5 2.9 7c1-2.2 1.5-4.5 1.5-7S7.6 3.1 6.6 0.9z" fill="#b52c16"/>
<path d="M23.8 0.9c4 0.9 6.3 3.7 6.3 7s-2.3 6.1-6.3 7c2-2 2.9-4.3 2.9-7s-0.9-5-2.9-7z" fill="#d8401f"/>
<path d="M23.8 0.9c2 2 2.9 4.3 2.9 7s-0.9 5-2.9 7c-1-2.2-1.5-4.5-1.5-7s0.5-4.8 1.5-7z" fill="#e2553a"/>
<path d="M8.6 12.8c0-3.6 1-6 2.6-6s2.6 2.4 2.6 6z" fill="#e8743c"/>
<circle cx="11.2" cy="5.2" r="1.7" fill="#f3c9a8"/>
<path d="M10.4 3.8l0.8-2.2 0.8 2.2z" fill="#d8d0c8"/>
<path d="M16.2 12.8c0-3.6 1-6 2.7-6s2.7 2.4 2.7 6z" fill="#d9a183"/>
<circle cx="18.9" cy="5" r="1.7" fill="#ead9b5"/>
<path d="M17.4 4.2a1.6 1.6 0 0 1 3 0z" fill="#7a6a3a"/>
<rect x="6.4" y="12.8" width="17.6" height="1.5" rx="0.5" fill="#ece6e2"/>
</svg>
<svg style="left:417.9px;top:481.6px" width="13.1" height="12" viewBox="0 0 13.1 12"><rect x="0" y="4.4" width="9.9" height="7.6" rx="1.3" fill="#6a6a6a"/><rect x="2.4" y="0" width="10.7" height="8.1" rx="1.3" fill="#ececec"/></svg>
<svg style="left:440.7px;top:481.1px" width="12.8" height="12" viewBox="0 0 12.8 12">
<defs>
<linearGradient id="cpa" x1="0" y1="0" x2="0" y2="1"><stop offset="0" stop-color="#2f86f2"/><stop offset="0.45" stop-color="#4fc3a0"/><stop offset="0.75" stop-color="#b6d84a"/><stop offset="1" stop-color="#f6c83a"/></linearGradient>
<linearGradient id="cpb" x1="0" y1="0" x2="0" y2="1"><stop offset="0" stop-color="#8a5cf0"/><stop offset="0.45" stop-color="#e85aa8"/><stop offset="0.8" stop-color="#f47a4a"/><stop offset="1" stop-color="#f5a030"/></linearGradient>
</defs>
<path d="M3.4 0.9h3c0.9 0 1.4 0.6 1.2 1.5L5.9 9.3c-0.2 0.9-1 1.5-1.9 1.5H2.2c-1.2 0-1.9-0.9-1.6-2.1l1.1-5.9C1.9 1.7 2.5 0.9 3.4 0.9z" fill="url(#cpa)"/>
<path d="M8.8 1.2h1.8c1.2 0 1.9 0.9 1.6 2.1l-1.1 5.9c-0.2 1.1-0.8 1.9-1.7 1.9h-3c-0.9 0-1.4-0.6-1.2-1.5L6.9 2.7c0.2-0.9 1-1.5 1.9-1.5z" fill="url(#cpb)"/>
</svg>
<svg style="left:464px;top:480.7px" width="12" height="12" viewBox="0 0 12 12"><circle cx="9.6" cy="2.9" r="1.5" fill="#8d94f0"/><circle cx="4.2" cy="1.9" r="1.7" fill="#7b83eb"/><path d="M6.6 5.3h4.6a0.7 0.7 0 0 1 0.7 0.7v3.4a2.5 2.5 0 0 1-2.5 2.5H8.5a2 2 0 0 1-1.9-2z" fill="#8d94f0"/><rect x="0.5" y="4.6" width="7" height="7.2" rx="1.3" fill="#6a72e0"/><path d="M2.5 6.3h3M4 6.3v4" stroke="#e6e8ff" stroke-width="1"/></svg>
<svg style="left:487px;top:480.5px" width="14" height="17" viewBox="0 0 14 17"><circle cx="6" cy="7" r="5.4" fill="#fff"/><path d="M6 7L1.33 4.3A5.4 5.4 0 0 1 10.68 4.3z" fill="#ea4335"/><path d="M6 7l4.68-2.7A5.4 5.4 0 0 1 6 12.4z" fill="#fbbc05"/><path d="M6 7v5.4A5.4 5.4 0 0 1 1.33 4.3z" fill="#34a853"/><circle cx="6" cy="7" r="2.5" fill="#fff"/><circle cx="6" cy="7" r="1.9" fill="#4285f4"/><circle cx="10.6" cy="2.9" r="2.7" fill="#d9d4cf"/><circle cx="10.6" cy="2.3" r="1" fill="#7a5b48"/><path d="M8.7 4.8a1.9 1.9 0 0 1 3.8 0z" fill="#444"/><rect x="4.5" y="15.4" width="3" height="1" rx="0.5" fill="#8a8a8a"/></svg>
<div class="abs" style="left:505.5px;top:477.5px;width:21px;height:21px;background:#2c2c2c;border-radius:2.5px;border:0.5px solid #323232"></div>
<svg style="left:509.4px;top:482.2px" width="13.2" height="10.8" viewBox="0 0 13.2 10.8"><path d="M0.3 1.4a0.9 0.9 0 0 1 0.9-0.9h3l1.2 1.2h5.9a0.9 0.9 0 0 1 0.9 0.9v6.6a0.9 0.9 0 0 1-0.9 0.9H1.2a0.9 0.9 0 0 1-0.9-0.9z" fill="#f3b927"/><path d="M0.3 3.6h11.9v5.6a0.9 0.9 0 0 1-0.9 0.9H1.2a0.9 0.9 0 0 1-0.9-0.9z" fill="#fbd669"/><path d="M0.3 7.8h11.9v1.4a0.9 0.9 0 0 1-0.9 0.9H1.2a0.9 0.9 0 0 1-0.9-0.9z" fill="#2d86d6"/></svg>
<div class="abs" style="left:512.3px;top:496px;width:7.5px;height:1.5px;background:#4cc2ff;border-radius:1px"></div>
<svg style="left:661px;top:486px" width="6" height="4" viewBox="0 0 6 4"><path d="M0.5 3.4L3 0.8l2.5 2.6" fill="none" stroke="#eee" stroke-width="1"/></svg>
<div class="t" style="top:483.00px;font-size:6.80px;color:#dcdcdc;line-height:10px;height:10px;left:681.00px;width:200px;margin-left:-100px;text-align:center;"><span class="kw" style="width:0.654em"><span class="ls">A</span></span></div>
<svg style="left:696px;top:483.5px" width="9" height="9" viewBox="0 0 9 9"><circle cx="4.2" cy="4.2" r="3.8" fill="#1e7fe0"/><circle cx="3.2" cy="3.4" r="1.8" fill="#4da3f3" opacity="0.6"/><circle cx="6.9" cy="7" r="1.3" fill="#e6b422"/></svg>
<svg style="left:715.7px;top:484px" width="9.4" height="7.2" viewBox="0 0 9.4 7.2"><path d="M4.7 7L0.3 2.4a6.3 6.3 0 0 1 8.8 0z" fill="#e8e8e8"/><path d="M1.5 3.7a4.6 4.6 0 0 1 6.4 0M2.7 5a2.9 2.9 0 0 1 4 0" fill="none" stroke="#212121" stroke-width="0.55"/></svg>
<svg style="left:728px;top:484.5px" width="10" height="7" viewBox="0 0 10 7"><path d="M0.5 2.3h1.5l2-1.8v6l-2-1.8H0.5z" fill="none" stroke="#ddd" stroke-width="0.7" stroke-linejoin="round"/><path d="M6 2.2l2.6 2.6M8.6 2.2L6 4.8" stroke="#ddd" stroke-width="0.7"/></svg>
<svg style="left:741px;top:485px" width="10" height="6" viewBox="0 0 10 6"><rect x="0.4" y="0.4" width="8" height="5.2" rx="1.2" fill="none" stroke="#eee" stroke-width="0.8"/><rect x="1.4" y="1.4" width="3.6" height="3.2" rx="0.5" fill="#eee"/><path d="M9.2 2v2" stroke="#eee" stroke-width="0.9"/></svg>
<div class="t" style="top:478.80px;font-size:6.40px;color:#f0f0f0;line-height:10px;height:10px;right:10.00px;text-align:right;"><span class="kw" style="width:2.452em"><span class="ls">12:16</span></span></div>
<div class="t" style="top:487.00px;font-size:6.40px;color:#f0f0f0;line-height:10px;height:10px;right:10.00px;text-align:right;"><span class="kw" style="width:4.905em"><span class="ls">2025/12/18</span></span></div>
<!-- 90_menu -->
<div class="abs" style="left:166.5px;top:139.5px;width:170.5px;height:256.5px;background:#2c2c2c;border:1px solid #323232;border-radius:4.5px;box-shadow:0 3px 9px rgba(0,0,0,0.5)"></div>
<div class="abs" style="left:167.5px;top:140.5px;width:35px;height:29.5px;border-radius:3.5px 2px 2px 2px;background:linear-gradient(90deg,#3e3311 0,#3c3214 70%,#39301a 100%)"></div>
<div class="hsep" style="left:167.5px;top:172px;width:168.5px;background:#373737"></div>
<div class="hsep" style="left:167.5px;top:374.5px;width:167px;background:#373737"></div>
<div class="abs" style="left:169.5px;top:273.5px;width:163.5px;height:15.5px;background:#383838;border-radius:2px"></div>
<svg style="left:179.2px;top:145.4px" width="8.3" height="9.2" viewBox="0 0 9 10"><path d="M2.2 0.4L6 6.6M6.8 0.4L3 6.6" fill="none" stroke="#b7c9b0" stroke-width="0.8"/><circle cx="2.3" cy="7.8" r="1.5" fill="none" stroke="#5aa58f" stroke-width="0.8"/><circle cx="6.7" cy="7.8" r="1.5" fill="none" stroke="#5aa58f" stroke-width="0.8"/></svg>
<svg style="left:213.9px;top:145.9px" width="8.3" height="8.3" viewBox="0 0 9 9"><rect x="3" y="0.5" width="5.3" height="6" rx="1.2" fill="none" stroke="#5fb0e0" stroke-width="0.8"/><path d="M2.6 2.3H1.7a1.2 1.2 0 0 0-1.2 1.2v3.8a1.2 1.2 0 0 0 1.2 1.2h3a1.2 1.2 0 0 0 1.2-1.2v-0.5" fill="none" stroke="#d8d8d8" stroke-width="0.8"/></svg>
<svg style="left:247.3px;top:145.9px" width="8.3" height="8.3" viewBox="0 0 9 9"><rect x="0.5" y="1.6" width="8" height="5.8" rx="1.2" fill="none" stroke="#5fb0e0" stroke-width="0.8"/><path d="M5.9 0.3v8.4M4.9 0.3h2M4.9 8.7h2" stroke="#d8d8d8" stroke-width="0.7"/><path d="M1.9 6L3.2 3l1.3 3M2.3 5h1.8" fill="none" stroke="#5fb0e0" stroke-width="0.6"/></svg>
<svg style="left:280.9px;top:145.9px" width="8.3" height="8.3" viewBox="0 0 9 9"><path d="M3.6 1.6H2a1.4 1.4 0 0 0-1.4 1.4v4a1.4 1.4 0 0 0 1.4 1.4h4a1.4 1.4 0 0 0 1.4-1.4V6.4" fill="none" stroke="#d8d8d8" stroke-width="0.8"/><path d="M5.6 0.5l2.9 2.4-2.9 2.4V3.9C4.2 3.8 3.3 4.4 2.7 5.6 2.8 3.5 3.8 2.2 5.6 2z" fill="none" stroke="#5fb0e0" stroke-width="0.8" stroke-linejoin="round"/></svg>
<svg style="left:315.1px;top:145.9px" width="7.4" height="8.3" viewBox="0 0 8 9"><path d="M0.3 1.7h7.4M2.8 1.6a1.2 1.2 0 0 1 2.4 0" fill="none" stroke="#d8d8d8" stroke-width="0.8"/><path d="M1.1 1.9l0.6 5.7a1 1 0 0 0 1 0.9h2.6a1 1 0 0 0 1-0.9l0.6-5.7" fill="none" stroke="#d8d8d8" stroke-width="0.8"/><path d="M3.2 3.6v3M4.8 3.6v3" stroke="#d8d8d8" stroke-width="0.6"/></svg>
<div class="t" style="top:157.40px;font-size:6.00px;color:#ececec;line-height:10px;height:10px;left:184.00px;width:200px;margin-left:-100px;text-align:center;">切<span class="kw" style="width:0.77em"><span class="ks">り</span></span>取<span class="kw" style="width:0.77em"><span class="ks">り</span></span></div>
<div class="t" style="top:157.40px;font-size:6.00px;color:#ececec;line-height:10px;height:10px;left:218.00px;width:200px;margin-left:-100px;text-align:center;"><span class="kw" style="width:2.29em"><span class="ks">コピー</span></span></div>
<div class="t" style="top:157.40px;font-size:6.00px;color:#ececec;line-height:10px;height:10px;left:251.50px;width:200px;margin-left:-100px;text-align:center;">名前<span class="kw" style="width:0.77em"><span class="ks">の</span></span>変更</div>
<div class="t" style="top:157.40px;font-size:6.00px;color:#ececec;line-height:10px;height:10px;left:285.20px;width:200px;margin-left:-100px;text-align:center;">共有</div>
<div class="t" style="top:157.40px;font-size:6.00px;color:#ececec;line-height:10px;height:10px;left:319.00px;width:200px;margin-left:-100px;text-align:center;">削除</div>
<svg style="left:174.56px;top:177.52px" width="8.28" height="7.36" viewBox="0 0 9 8"><path d="M0.3 1.2a0.7 0.7 0 0 1 0.7-0.7h2.2l0.9 0.9h3.9a0.7 0.7 0 0 1 0.7 0.7v4.9a0.7 0.7 0 0 1-0.7 0.7H1a0.7 0.7 0 0 1-0.7-0.7z" fill="#f3b927"/><path d="M0.3 2.8h8.4v4.2a0.7 0.7 0 0 1-0.7 0.7H1a0.7 0.7 0 0 1-0.7-0.7z" fill="#fbd669"/><rect x="0.3" y="5.9" width="8.4" height="1.8" rx="0.6" fill="#2a74c8"/></svg>
<div class="t" style="top:176.20px;font-size:7.30px;color:#fff;line-height:10px;height:10px;left:189.00px;">開<span class="kw" style="width:0.77em"><span class="ks">く</span></span></div>
<div class="t" style="top:176.20px;font-size:6.25px;color:#d4d4d4;line-height:10px;height:10px;left:293.50px;"><span class="kw" style="width:2.342em"><span class="ls">Enter</span></span></div>
<svg style="left:174.56px;top:193.76px" width="8.28" height="8.28" viewBox="0 0 9 9"><path d="M0.6 0.8h2.2M0.6 3.2h2.2M0.6 5.6h1.6M4.4 0.8h3.6M4.4 3.2h1" stroke="#d8d8d8" stroke-width="0.9"/><circle cx="6" cy="6" r="2.4" fill="none" stroke="#5fb0e0" stroke-width="1"/><circle cx="6" cy="6" r="0.8" fill="#5fb0e0"/></svg>
<div class="t" style="top:192.90px;font-size:7.30px;color:#fff;line-height:10px;height:10px;left:189.00px;"><span class="kw" style="width:5.36em"><span class="ks">プログラムから</span></span>開<span class="kw" style="width:0.77em"><span class="ks">く</span></span></div>
<svg style="left:323.5px;top:195.4px" width="3" height="5" viewBox="0 0 3 5"><path d="M0.4 0.3L2.6 2.5 0.4 4.7" fill="none" stroke="#ccc" stroke-width="0.8"/></svg>
<svg style="left:174.56px;top:210.46px" width="8.28" height="8.28" viewBox="0 0 9 9"><rect x="0.5" y="0.5" width="8" height="8" rx="1.6" fill="none" stroke="#d8d8d8" stroke-width="0.8"/><path d="M2.2 6.8V3.4a0.8 0.8 0 0 1 0.8-0.8h2.2a0.8 0.8 0 0 1 0.8 0.8v1.4" fill="none" stroke="#5fb0e0" stroke-width="0.8"/></svg>
<div class="t" style="top:209.60px;font-size:7.30px;color:#fff;line-height:10px;height:10px;left:189.00px;">新<span class="kw" style="width:3.83em"><span class="ks">しいタブで</span></span>開<span class="kw" style="width:0.77em"><span class="ks">く</span></span></div>
<svg style="left:174.56px;top:227.16px" width="8.28" height="8.28" viewBox="0 0 9 9"><path d="M3.8 1.2H2a1.5 1.5 0 0 0-1.5 1.5V7a1.5 1.5 0 0 0 1.5 1.5h4.3A1.5 1.5 0 0 0 7.8 7V5.2" fill="none" stroke="#d8d8d8" stroke-width="0.8"/><path d="M5.2 0.5h3.3v3.3M8.4 0.6L4.4 4.6" fill="none" stroke="#5fb0e0" stroke-width="0.8"/></svg>
<div class="t" style="top:226.30px;font-size:7.30px;color:#fff;line-height:10px;height:10px;left:189.00px;">新<span class="kw" style="width:6.12em"><span class="ks">しいウィンドウで</span></span>開<span class="kw" style="width:0.77em"><span class="ks">く</span></span></div>
<svg style="left:174.56px;top:243.86px" width="8.28" height="8.28" viewBox="0 0 9 9"><rect x="1.8" y="0.5" width="5.4" height="8" rx="1.1" fill="none" stroke="#d8d8d8" stroke-width="0.8"/><path d="M3.6 7h1.8" stroke="#d8d8d8" stroke-width="0.6"/></svg>
<div class="t" style="top:243.00px;font-size:7.30px;color:#fff;line-height:10px;height:10px;left:189.00px;"><span class="kw" style="width:4.685em"><span class="ls">My&nbsp;Phone&nbsp;</span></span><span class="kw" style="width:0.77em"><span class="ks">に</span></span>送信</div>
<svg style="left:174.56px;top:260.56px" width="8.28" height="8.28" viewBox="0 0 9 9"><path d="M3.6 1.6H2a1.4 1.4 0 0 0-1.4 1.4v4a1.4 1.4 0 0 0 1.4 1.4h4a1.4 1.4 0 0 0 1.4-1.4V6.4" fill="none" stroke="#d8d8d8" stroke-width="0.8"/><path d="M5.6 0.5l2.9 2.4-2.9 2.4V3.9C4.2 3.8 3.3 4.4 2.7 5.6 2.8 3.5 3.8 2.2 5.6 2z" fill="none" stroke="#5fb0e0" stroke-width="0.8" stroke-linejoin="round"/></svg>
<div class="t" style="top:259.70px;font-size:7.30px;color:#fff;line-height:10px;height:10px;left:189.00px;">共有先</div>
<svg style="left:323.5px;top:262.2px" width="3" height="5" viewBox="0 0 3 5"><path d="M0.4 0.3L2.6 2.5 0.4 4.7" fill="none" stroke="#ccc" stroke-width="0.8"/></svg>
<svg style="left:174.56px;top:277.26px" width="8.28" height="8.28" viewBox="0 0 9 9"><path d="M0.5 7V1.6a1 1 0 0 1 1-1h1.7l1 1h3.2a1 1 0 0 1 1 1V4" fill="none" stroke="#d8d8d8" stroke-width="0.8"/><path d="M0.5 7a1 1 0 0 0 1 1H4" fill="none" stroke="#d8d8d8" stroke-width="0.8"/><circle cx="6.3" cy="6.3" r="2.3" fill="none" stroke="#5fb0e0" stroke-width="0.9"/><path d="M5.3 6.3h2M6.5 5.4l0.9 0.9-0.9 0.9" fill="none" stroke="#5fb0e0" stroke-width="0.6"/></svg>
<div class="t" style="top:276.40px;font-size:7.30px;color:#fff;line-height:10px;height:10px;left:189.00px;"><span class="kw" style="width:2.29em"><span class="ks">すべて</span></span>展開<span class="kw" style="width:0.817em"><span class="ls">...</span></span></div>
<svg style="left:174.56px;top:293.96px" width="8.28" height="8.28" viewBox="0 0 9 9"><path d="M5.4 0.5l3.1 3.1-1.3 0.5-1.6 1.6-0.2 2.1L1.2 3.6l2.1-0.2 1.6-1.6zM3.2 5.8L0.5 8.5" fill="none" stroke="#5fb0e0" stroke-width="0.8" stroke-linejoin="round"/></svg>
<div class="t" style="top:293.10px;font-size:7.30px;color:#fff;line-height:10px;height:10px;left:189.00px;"><span class="kw" style="width:3.06em"><span class="ks">スタート</span></span> <span class="kw" style="width:2.29em"><span class="ks">にピン</span></span>留<span class="kw" style="width:2.29em"><span class="ks">めする</span></span></div>
<svg style="left:174.56px;top:310.66px" width="8.28" height="8.28" viewBox="0 0 9 9"><path d="M4.5 0.6l1.2 2.6 2.8 0.3-2.1 1.9 0.6 2.8-2.5-1.4-2.5 1.4 0.6-2.8L0.5 3.5l2.8-0.3z" fill="none" stroke="#5fb0e0" stroke-width="0.8" stroke-linejoin="round"/></svg>
<div class="t" style="top:309.80px;font-size:7.30px;color:#fff;line-height:10px;height:10px;left:189.00px;"><span class="kw" style="width:0.77em"><span class="ks">お</span></span>気<span class="kw" style="width:0.77em"><span class="ks">に</span></span>入<span class="kw" style="width:1.53em"><span class="ks">りに</span></span>追加</div>
<svg style="left:174.56px;top:327.36px" width="8.28" height="8.28" viewBox="0 0 9 9"><path d="M0.5 6.8V1.8a1 1 0 0 1 1-1h1.7l1 1h3.3a1 1 0 0 1 1 1v4a1 1 0 0 1-1 1h-6a1 1 0 0 1-1-1z" fill="none" stroke="#d8d8d8" stroke-width="0.8"/><path d="M6 1.8v6" stroke="#5fb0e0" stroke-width="0.8" stroke-dasharray="1 0.8"/></svg>
<div class="t" style="top:326.50px;font-size:7.30px;color:#fff;line-height:10px;height:10px;left:189.00px;">圧縮先<span class="kw" style="width:0.817em"><span class="ls">...</span></span></div>
<svg style="left:323.5px;top:329px" width="3" height="5" viewBox="0 0 3 5"><path d="M0.4 0.3L2.6 2.5 0.4 4.7" fill="none" stroke="#ccc" stroke-width="0.8"/></svg>
<svg style="left:174.56px;top:344.06px" width="8.28" height="8.28" viewBox="0 0 9 9"><rect x="0.5" y="1" width="8" height="6.6" rx="1.2" fill="none" stroke="#d8d8d8" stroke-width="0.8"/><path d="M2 2.8l1 1.4M4 5.8h2.6" stroke="#5fb0e0" stroke-width="0.7"/></svg>
<div class="t" style="top:343.20px;font-size:7.30px;color:#fff;line-height:10px;height:10px;left:189.00px;"><span class="kw" style="width:4.59em"><span class="ks">パスのコピー</span></span></div>
<div class="t" style="top:343.20px;font-size:6.25px;color:#d4d4d4;line-height:10px;height:10px;left:293.50px;"><span class="kw" style="width:5.337em"><span class="ls">Ctrl+Shift+C</span></span></div>
<svg style="left:174.56px;top:360.76px" width="8.28" height="8.28" viewBox="0 0 9 9"><circle cx="6" cy="3" r="2.4" fill="none" stroke="#d8d8d8" stroke-width="0.8"/><path d="M4.2 4.6L0.8 8v0.6h1.4l0.5-0.9 0.9-0.2 0.3-0.9 0.9-0.3" fill="none" stroke="#d8d8d8" stroke-width="0.8" stroke-linejoin="round"/><circle cx="6.7" cy="2.3" r="0.5" fill="#d8d8d8"/></svg>
<div class="t" style="top:359.90px;font-size:7.30px;color:#fff;line-height:10px;height:10px;left:189.00px;"><span class="kw" style="width:3.83em"><span class="ks">プロパティ</span></span></div>
<div class="t" style="top:359.90px;font-size:6.25px;color:#d4d4d4;line-height:10px;height:10px;left:293.50px;"><span class="kw" style="width:4.058em"><span class="ls">Alt+Enter</span></span></div>
<svg style="left:174.6px;top:381.1px" width="8.3" height="8.3" viewBox="0 0 9 9"><path d="M3.6 0.6H2A1.4 1.4 0 0 0 0.6 2v1.6M0.6 5.4V7A1.4 1.4 0 0 0 2 8.4h1.6M5.4 8.4H7A1.4 1.4 0 0 0 8.4 7V5.4" fill="none" stroke="#d8d8d8" stroke-width="0.8"/><path d="M5.4 0.6h3v3M8.3 0.7L4.6 4.4" fill="none" stroke="#5fb0e0" stroke-width="0.8"/></svg>
<div class="t" style="top:380.20px;font-size:7.30px;color:#fff;line-height:10px;height:10px;left:189.00px;"><span class="kw" style="width:1.53em"><span class="ks">その</span></span>他<span class="kw" style="width:5.36em"><span class="ks">のオプションを</span></span>確認</div>
</body>
</html>
